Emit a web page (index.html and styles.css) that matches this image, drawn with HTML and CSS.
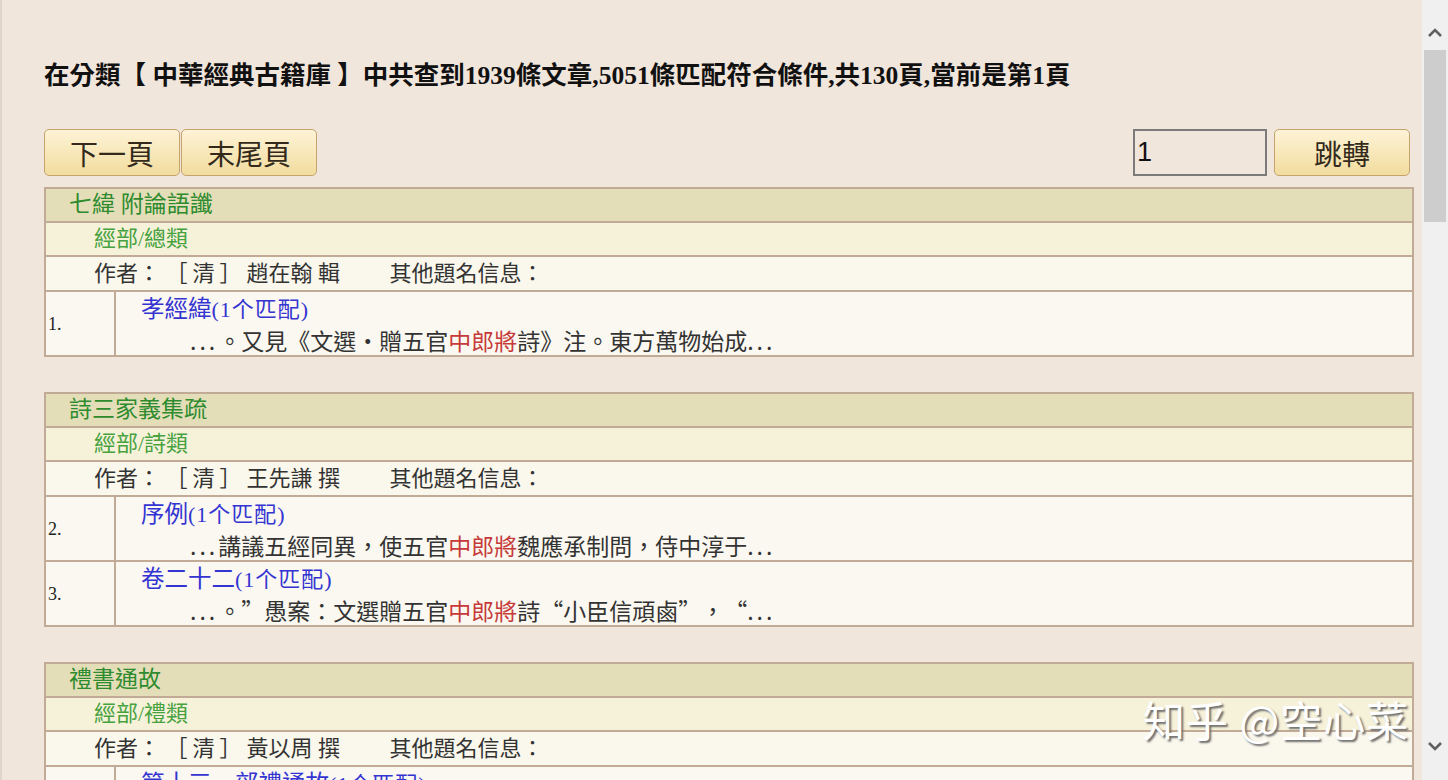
FILE: index.html
```html
<!DOCTYPE html>
<html lang="zh-Hant">
<head>
    <meta charset="UTF-8">
    <title>中華經典古籍庫 - 檢索結果</title>
    <link rel="stylesheet" href="styles.css">
</head>
<body>
<div class="window">
    <div class="page">
        <h1 class="summary">在分類【 中華經典古籍庫 】中共查到1939條文章,5051條匹配符合條件,共130頁,當前是第1頁</h1>

        <!-- paging -->
        <div class="toolbar">
            <div class="pager">
                <button class="btn">下一頁</button>
                <button class="btn">末尾頁</button>
            </div>
            <div class="jump">
                <input class="page-input" type="text" value="1">
                <button class="btn">跳轉</button>
            </div>
        </div>

        <!-- result 1 -->
        <table class="result">
            <tr class="book"><td colspan="2">七緯 附論語讖</td></tr>
            <tr class="cat"><td colspan="2">經部/總類</td></tr>
            <tr class="author"><td colspan="2">作者：&nbsp;<span class="era">［清］</span>趙在翰 輯　　&nbsp;其他題名信息：</td></tr>
            <tr class="hit">
                <td class="num">1.</td>
                <td class="body">
                    <a class="chapter" href="#">孝經緯<span class="count">(1个匹配)</span></a>
                    <div class="snippet"><span class="dots">...</span>。又見《文選・贈五官<em>中郎將</em>詩》注。東方萬物始成<span class="dots">...</span></div>
                </td>
            </tr>
        </table>

        <!-- result 2 -->
        <table class="result">
            <tr class="book"><td colspan="2">詩三家義集疏</td></tr>
            <tr class="cat"><td colspan="2">經部/詩類</td></tr>
            <tr class="author"><td colspan="2">作者：&nbsp;<span class="era">［清］</span>王先謙 撰　　&nbsp;其他題名信息：</td></tr>
            <tr class="hit">
                <td class="num">2.</td>
                <td class="body">
                    <a class="chapter" href="#">序例<span class="count">(1个匹配)</span></a>
                    <div class="snippet"><span class="dots">...</span>講議五經同異，使五官<em>中郎將</em>魏應承制問，侍中淳于<span class="dots">...</span></div>
                </td>
            </tr>
            <tr class="hit">
                <td class="num">3.</td>
                <td class="body">
                    <a class="chapter" href="#">卷二十二<span class="count">(1个匹配)</span></a>
                    <div class="snippet"><span class="dots">...</span>。”愚案：文選贈五官<em>中郎將</em>詩“小臣信頑鹵”，“<span class="dots">...</span></div>
                </td>
            </tr>
        </table>

        <!-- result 3 -->
        <table class="result">
            <tr class="book"><td colspan="2">禮書通故</td></tr>
            <tr class="cat"><td colspan="2">經部/禮類</td></tr>
            <tr class="author"><td colspan="2">作者：&nbsp;<span class="era">［清］</span>黃以周 撰　　&nbsp;其他題名信息：</td></tr>
            <tr class="hit">
                <td class="num">4.</td>
                <td class="body">
                    <a class="chapter" href="#">第十三　郊禮通故<span class="count">(1个匹配)</span></a>
                    <div class="snippet"><span class="dots">...</span></div>
                </td>
            </tr>
        </table>
    </div>

    <!-- fake scrollbar -->
    <div class="scrollbar">
        <svg class="arrow" width="16" height="12" viewBox="0 0 16 12"><path d="M2 9 L8 3 L14 9" fill="none" stroke="#5f5f5f" stroke-width="2.6"/></svg>
        <div class="thumb"></div>
        <div class="track"></div>
        <svg class="arrow" width="16" height="12" viewBox="0 0 16 12"><path d="M2 3 L8 9 L14 3" fill="none" stroke="#5f5f5f" stroke-width="2.6"/></svg>
    </div>

    <div class="watermark">知乎 @空心菜</div>
</div>
</body>
</html>
```

FILE: styles.css
```css
/* General */
body {
    margin: 0;
    font-family: "Liberation Serif", "Noto Sans CJK TC", serif;
    background: #f1e6dc;
    color: #333;
    overflow: hidden;
    text-spacing-trim: space-all;
}

.window {
    position: relative;
    display: flex;
    height: 780px;
}

.page {
    flex: 1;
    padding: 61px 8px 0 42px;
    border-left: 2px solid #e0d5ca;
    overflow: hidden;
}

/* Summary line */
.summary {
    margin: 0;
    font-size: 25.5px;
    line-height: 30px;
    font-weight: bold;
    color: #111;
    font-family: "Liberation Serif", "Noto Sans CJK TC", serif;
}

/* Toolbar */
.toolbar {
    display: flex;
    justify-content: space-between;
    margin-top: 38px;
    height: 47px;
    padding-right: 4px;
}

.pager,
.jump {
    display: flex;
    gap: 1px;
}

.jump {
    gap: 7px;
}

.btn {
    width: 136px;
    height: 47px;
    border: 1px solid #c6a36d;
    border-radius: 5px;
    background: linear-gradient(#fdf3d6, #f2dc9e);
    font-family: "Noto Sans CJK TC", sans-serif;
    font-size: 28px;
    line-height: 1;
    color: #332a1c;
    padding: 0;
    cursor: pointer;
}

.page-input {
    width: 134px;
    height: 47px;
    box-sizing: border-box;
    border: 2px solid #7b7b7b;
    background: transparent;
    font-family: "Liberation Sans", sans-serif;
    font-size: 27px;
    color: #111;
    padding: 0 2px;
}

/* Result tables */
.result {
    width: 1370px;
    border-collapse: collapse;
    margin-top: 11px;
    margin-bottom: 35px;
    font-size: 22px;
}

.result td {
    border: 2px solid #c1ab96;
    padding: 0;
    height: 32px;
    line-height: 32px;
    vertical-align: middle;
}

.book td {
    background: #e4deb8;
    color: #2e8b2e;
    font-size: 23px;
    padding-left: 23px;
}

.cat td {
    background: #f6f1d9;
    color: #46a23e;
    padding-left: 48px;
}

.author td {
    background: #faf7ec;
    color: #333;
    padding-left: 48px;
    height: 33px;
}

.author .era {
    letter-spacing: 5px;
}

.hit td {
    background: #faf8f0;
    height: 61px;
}

.hit .num {
    width: 66px;
    padding-left: 2px;
    font-size: 18px;
    color: #222;
}

.hit .body {
    padding-left: 25px;
    padding-top: 2px;
    line-height: 30px;
}

.chapter {
    display: block;
    color: #3434d2;
    font-size: 23.5px;
    text-decoration: none;
    line-height: 30px;
}

.chapter .count {
    font-size: 22px;
    letter-spacing: 1px;
}

.snippet {
    padding-left: 49px;
    color: #333;
    font-family: "Noto Sans CJK TC", sans-serif;
    font-size: 23px;
    line-height: 30px;
}

.snippet .dots {
    letter-spacing: 3px;
}

.snippet em {
    font-style: normal;
    color: #c63a3a;
}

/* Scrollbar */
.scrollbar {
    width: 26px;
    background: #f0f0f0;
    display: flex;
    flex-direction: column;
    align-items: center;
}

.scrollbar .arrow {
    margin: 27px 0 11px;
}

.scrollbar .arrow:last-child {
    margin: 0 0 28px;
}

.thumb {
    width: 22px;
    height: 172px;
    background: #cdcdcd;
}

.track {
    flex: 1;
}

/* Watermark */
.watermark {
    position: absolute;
    left: 1143px;
    top: 691px;
    font-family: "Noto Sans CJK SC", sans-serif;
    font-size: 42px;
    line-height: 56px;
    color: #fff;
    text-shadow: 2px 2px 2px #6d6d6d;
    letter-spacing: 1px;
}
```
